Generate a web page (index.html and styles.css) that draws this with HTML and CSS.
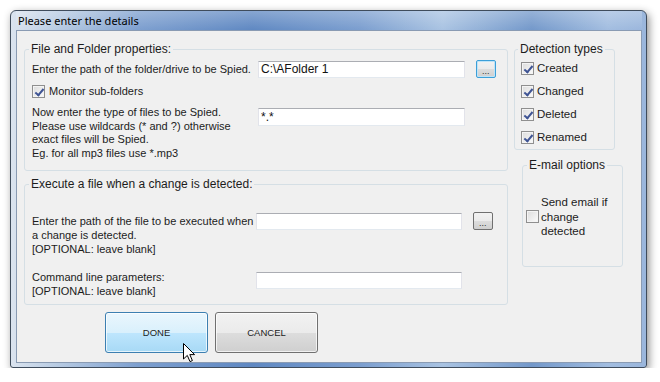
FILE: index.html
```html
<!DOCTYPE html>
<html lang="en">
<head>
    <meta charset="UTF-8">
    <title>Please enter the details</title>
    <link rel="stylesheet" href="styles.css">
</head>
<body>
    <div class="window">
        <div class="titlebar">Please enter the details</div>
        <div class="client">
            <div class="groups">
                <div class="col-left">
                    <fieldset class="group group-folder">
                        <legend>File and Folder properties:</legend>
                        <div class="row row-path">
                            <label class="label label-wide">Enter the path of the folder/drive to be Spied.</label>
                            <input class="textbox textbox-wide" type="text" value="C:\AFolder 1">
                            <button class="browse browse-focus"><span class="dots">...</span></button>
                        </div>
                        <div class="row row-check">
                            <span class="check checked"></span>
                            <span class="check-label">Monitor sub-folders</span>
                        </div>
                        <div class="row row-types">
                            <div class="label label-wide">Now enter the type of files to be Spied.<br>Please use wildcards (* and ?) otherwise<br>exact files will be Spied.<br>Eg. for all mp3 files use *.mp3</div>
                            <input class="textbox textbox-wide textbox-tall" type="text" value="*.*">
                        </div>
                    </fieldset>

                    <fieldset class="group group-exec">
                        <legend>Execute a file when a change is detected:</legend>
                        <div class="row row-exec">
                            <div class="label label-exec">Enter the path of the file to be executed when<br>a change is detected.<br>[OPTIONAL: leave blank]</div>
                            <input class="textbox textbox-exec" type="text">
                            <button class="browse"><span class="dots">...</span></button>
                        </div>
                        <div class="row row-params">
                            <div class="label label-exec">Command line parameters:<br>[OPTIONAL: leave blank]</div>
                            <input class="textbox textbox-exec" type="text">
                        </div>
                    </fieldset>
                </div>

                <div class="col-right">
                    <fieldset class="group group-detect">
                        <legend>Detection types</legend>
                        <div class="detect-list">
                            <div class="detect-item"><span class="check checked"></span><span class="check-label">Created</span></div>
                            <div class="detect-item"><span class="check checked"></span><span class="check-label">Changed</span></div>
                            <div class="detect-item"><span class="check checked"></span><span class="check-label">Deleted</span></div>
                            <div class="detect-item"><span class="check checked"></span><span class="check-label">Renamed</span></div>
                        </div>
                    </fieldset>

                    <fieldset class="group group-email">
                        <legend>E-mail options</legend>
                        <div class="email-item">
                            <span class="check"></span>
                            <span class="email-label">Send email if<br>change<br>detected</span>
                        </div>
                    </fieldset>
                </div>
            </div>

            <div class="actions">
                <button class="btn btn-hot">DONE
                    <svg class="cursor" viewBox="0 0 13 20" width="13" height="20">
                        <path d="M0.5 0.5 L0.5 16 L4.3 12.4 L7 18.6 L9.4 17.6 L6.8 11.6 L11.6 11.6 Z" fill="#fff" stroke="#000" stroke-width="1" stroke-linejoin="miter"></path>
                    </svg>
                </button>
                <button class="btn">CANCEL</button>
            </div>
        </div>
    </div>
</body>
</html>
```

FILE: styles.css
```css
* {
    box-sizing: border-box;
}

body {
    margin: 0;
    background-color: #ffffff;
    font-family: 'Liberation Sans', Arial, sans-serif;
    color: #1c1c1c;
}

.window {
    margin: 10px 0 0 10px;
    width: 637px;
    height: 358px;
    border: 1px solid #3f4c5c;
    border-radius: 6px 6px 3px 3px;
    padding: 0 4px 4px 5px;
    background: linear-gradient(90deg, #dbe4ef 0%, #b9cce3 7%, #7d9fcf 20%, #5f88c2 38%, #7b9ecf 55%, #a9c3e2 68%, #7398ca 82%, #a2bde0 94%, #9ab6dc 100%);
    box-shadow: 2px 3px 9px rgba(0, 0, 0, 0.45);
}

.titlebar {
    height: 19px;
    line-height: 19px;
    padding-left: 2px;
    font-family: 'Noto Sans', sans-serif;
    font-size: 11px;
    color: #000;
    background: linear-gradient(180deg, rgba(255, 255, 255, 0.25), rgba(255, 255, 255, 0));
}

.client {
    width: 626px;
    height: 333px;
    border: 1px solid #8a9bb3;
    background-color: #f0f0f0;
    padding: 11px 0 0 7px;
}

.groups {
    display: flex;
    gap: 6px;
}

.col-left {
    width: 484px;
}

.col-right {
    width: 109px;
}

.group {
    margin: 0;
    padding: 0 7px;
    min-width: 0;
    border: 1px solid #d5dfe5;
    border-radius: 3px;
}

.group legend {
    font-size: 12px;
    line-height: 14px;
    padding: 0 2px;
    margin-left: -3px;
    white-space: nowrap;
    color: #1c1c1c;
}

.group-folder {
    height: 129px;
}

.group-exec {
    margin-top: 6px;
    height: 128px;
}

.row {
    display: flex;
    align-items: flex-start;
}

.label {
    font-size: 11px;
    line-height: 13.5px;
    white-space: nowrap;
}

.label-wide {
    width: 226px;
}

.label-exec {
    width: 224px;
    line-height: 14px;
}

.row-path {
    margin-top: 4px;
    height: 18px;
    align-items: center;
}

.row-path .label {
    margin-top: 1px;
}

.textbox {
    height: 17px;
    border: 1px solid #e2e3ea;
    border-top-color: #abadb3;
    border-bottom-color: #e3e9ef;
    background: #fff;
    font-family: 'Liberation Sans', Arial, sans-serif;
    font-size: 12px;
    color: #111;
    padding: 0 2px;
    outline: none;
}

.textbox-wide {
    width: 207px;
}

.textbox-tall {
    height: 18px;
    margin-top: 2px;
}

.textbox-exec {
    width: 206px;
}

.browse {
    width: 20px;
    height: 18px;
    margin-left: 11px;
    padding: 0;
    border: 1px solid #707070;
    border-radius: 2px;
    background: linear-gradient(180deg, #f2f2f2 0%, #ebebeb 50%, #dddddd 51%, #cfcfcf 100%);
    position: relative;
}

.browse-focus {
    border-color: #3c9fd8;
    box-shadow: inset 0 0 0 1px #bfe4f8;
}

.dots {
    position: absolute;
    left: 5px;
    bottom: 1px;
    font-size: 9px;
    line-height: 9px;
    color: #333;
}

.row-check {
    margin-top: 6px;
    align-items: center;
    height: 14px;
}

.check {
    display: inline-block;
    width: 13px;
    height: 13px;
    border: 1px solid #8f8f8f;
    background: linear-gradient(135deg, #dcdcdc, #fbfbfb);
    box-shadow: inset 0 0 0 1px #f4f4f4;
    position: relative;
    flex: none;
}

.check.checked::after {
    content: "";
    position: absolute;
    left: 4px;
    top: 1px;
    width: 3px;
    height: 7px;
    border: solid #3f5494;
    border-width: 0 2px 2px 0;
    transform: rotate(40deg);
}

.check-label {
    font-size: 11px;
    margin-left: 4px;
}

.row-types {
    margin-top: 8px;
}

.row-exec {
    margin-top: 21px;
}

.row-exec .label {
    margin-top: 2px;
}

.row-exec .textbox {
    margin-top: 1px;
}

.row-params {
    margin-top: 14px;
}

.row-params .textbox {
    margin-top: 2px;
}

.group-detect {
    width: 101px;
    height: 108px;
    padding: 0 6px;
}

.detect-list {
    margin-top: 5px;
    display: flex;
    flex-direction: column;
    gap: 9px;
}

.detect-item {
    display: flex;
    align-items: center;
    height: 14px;
}

.detect-item .check-label {
    font-size: 11.5px;
    margin-left: 3px;
}

.group-email {
    width: 101px;
    height: 109px;
    margin: 8px 0 0 8px;
    padding: 0 3px;
}

.group-email legend {
    margin-left: 1px;
}

.email-item {
    margin-top: 23px;
    display: flex;
    align-items: center;
}

.email-label {
    font-size: 11.5px;
    line-height: 14.5px;
    margin-left: 2px;
}

.actions {
    display: flex;
    gap: 7px;
    margin: 7px 0 0 81px;
}

.btn {
    width: 103px;
    height: 41px;
    border: 1px solid #707070;
    border-radius: 3px;
    background: linear-gradient(180deg, #f2f2f2 0%, #ebebeb 50%, #dddddd 51%, #cfcfcf 100%);
    box-shadow: inset 0 0 0 1px rgba(255, 255, 255, 0.7);
    font-family: 'Liberation Sans', Arial, sans-serif;
    font-size: 9.5px;
    color: #1c1c1c;
    padding: 0;
    position: relative;
}

.btn-hot {
    border-color: #3c7fb1;
    background: linear-gradient(180deg, #eaf6fd 0%, #d9f0fc 50%, #bee6fd 51%, #a7d9f5 100%);
}

.cursor {
    position: absolute;
    left: 77px;
    top: 30px;
}
```
